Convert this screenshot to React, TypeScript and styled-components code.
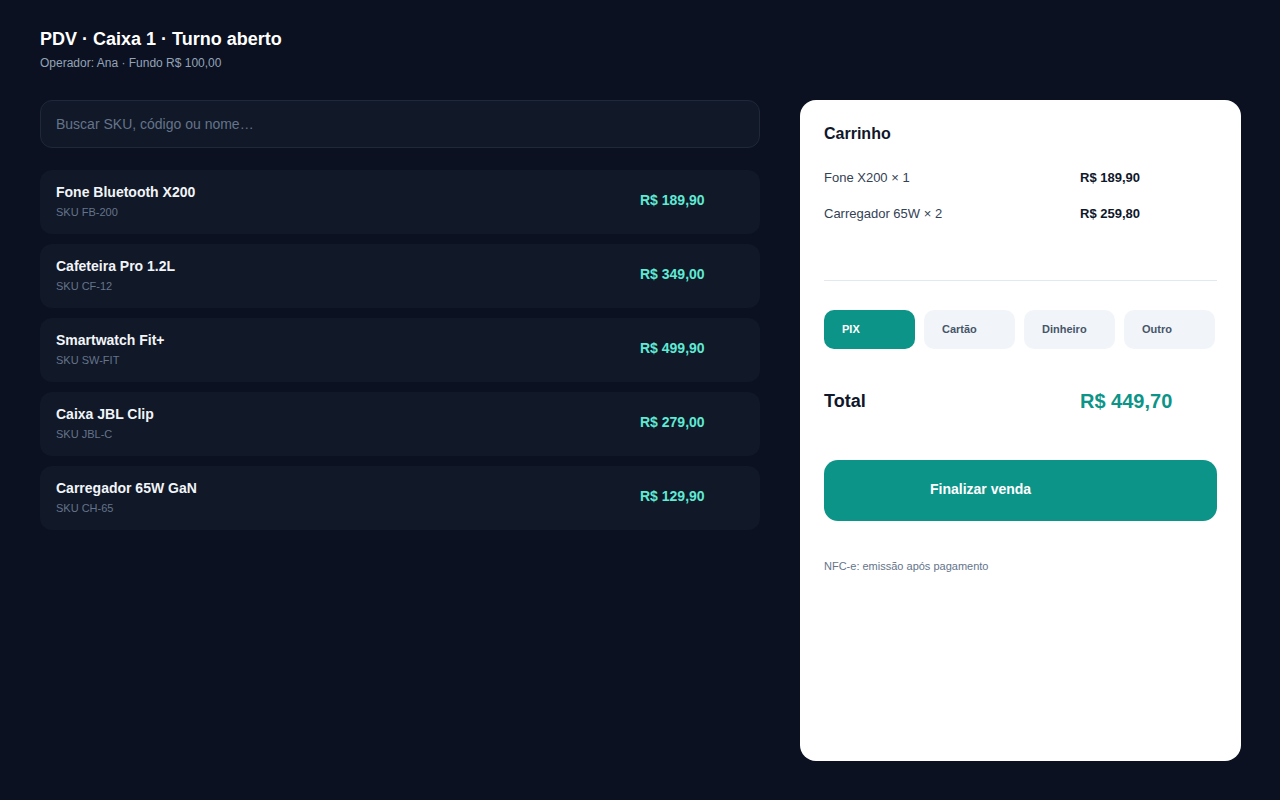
import React from 'react';
import styled, { createGlobalStyle } from 'styled-components';

const GlobalStyle = createGlobalStyle`
  html, body {
    margin: 0;
    padding: 0;
    background: #0b1120;
    font-family: "Liberation Sans", Arial, sans-serif;
  }
  * { box-sizing: border-box; }
`;

const Page = styled.div`
  width: 1280px;
  height: 800px;
  padding: 28px 39px 39px 40px;
  background: #0b1120;
  display: flex;
  flex-direction: column;
`;

const Header = styled.header`
  display: flex;
  flex-direction: column;
  gap: 5px;
  margin-bottom: 29px;
`;

const Title = styled.h1`
  margin: 0;
  font-size: 18px;
  line-height: 22px;
  font-weight: 700;
  color: #ffffff;
`;

const Subtitle = styled.div`
  font-size: 12px;
  line-height: 16px;
  color: #94a3b8;
`;

const Main = styled.main`
  flex: 1;
  display: grid;
  grid-template-columns: 720px 441px;
  gap: 40px;
  min-height: 0;
`;

const Catalog = styled.section`
  display: flex;
  flex-direction: column;
`;

const Search = styled.input`
  height: 48px;
  width: 100%;
  padding: 0 15px;
  margin-bottom: 22px;
  border-radius: 12px;
  border: 1px solid #1e293b;
  background: #111827;
  color: #e2e8f0;
  font-family: inherit;
  font-size: 14px;
  outline: none;
  &::placeholder { color: #64748b; }
`;

const ProductList = styled.div`
  display: flex;
  flex-direction: column;
  gap: 10px;
`;

const ProductRow = styled.div`
  height: 64px;
  padding: 0 16px;
  border-radius: 12px;
  background: #111827;
  display: grid;
  grid-template-columns: 1fr 104px;
  align-items: center;
`;

const ProductInfo = styled.div`
  display: flex;
  flex-direction: column;
  gap: 4px;
  margin-bottom: 2px;
`;

const ProductName = styled.div`
  font-size: 14px;
  line-height: 18px;
  font-weight: 700;
  color: #f1f5f9;
`;

const ProductSku = styled.div`
  font-size: 11px;
  line-height: 14px;
  color: #64748b;
`;

const ProductPrice = styled.div`
  font-size: 14px;
  font-weight: 700;
  color: #5eead4;
  margin-bottom: 4px;
`;

const Cart = styled.aside`
  background: #ffffff;
  border-radius: 16px;
  padding: 24px;
  display: flex;
  flex-direction: column;
`;

const CartTitle = styled.h2`
  margin: 0 0 15px;
  font-size: 16px;
  line-height: 20px;
  font-weight: 700;
  color: #0f172a;
`;

const CartItems = styled.div`
  display: flex;
  flex-direction: column;
  min-height: 121px;
`;

const LineRow = styled.div`
  height: 36px;
  display: grid;
  grid-template-columns: 1fr 137px;
  align-items: center;
`;

const ItemLabel = styled.span`
  font-size: 13px;
  color: #334155;
`;

const ItemPrice = styled.span`
  font-size: 13px;
  font-weight: 700;
  color: #0f172a;
`;

const Divider = styled.hr`
  margin: 0 0 29px;
  border: 0;
  border-top: 1px solid #e2e8f0;
`;

const Methods = styled.div`
  display: grid;
  grid-template-columns: repeat(4, 91px);
  gap: 9px;
  margin-bottom: 32px;
`;

const Method = styled.button<{ $active?: boolean }>`
  height: 39px;
  border: 0;
  border-radius: 10px;
  padding: 0 18px 2px;
  text-align: left;
  font-family: inherit;
  font-size: 11px;
  font-weight: 700;
  cursor: pointer;
  background: ${(p) => (p.$active ? '#0d9488' : '#f1f5f9')};
  color: ${(p) => (p.$active ? '#ffffff' : '#475569')};
`;

const TotalRow = styled.div`
  display: grid;
  grid-template-columns: 1fr 137px;
  align-items: center;
  height: 40px;
  margin-bottom: 39px;
`;

const TotalLabel = styled.span`
  font-size: 18px;
  font-weight: 700;
  color: #0f172a;
`;

const TotalValue = styled.span`
  font-size: 20px;
  font-weight: 700;
  color: #0d9488;
`;

const Checkout = styled.button`
  height: 61px;
  width: 100%;
  border: 0;
  border-radius: 14px;
  background: #0d9488;
  color: #ffffff;
  font-family: inherit;
  font-size: 14px;
  font-weight: 700;
  text-align: left;
  padding: 0 0 4px 106px;
  cursor: pointer;
  margin-bottom: 39px;
`;

const Note = styled.div`
  font-size: 11px;
  color: #64748b;
`;

const products = [
  { name: 'Fone Bluetooth X200', sku: 'FB-200', price: 'R$ 189,90' },
  { name: 'Cafeteira Pro 1.2L', sku: 'CF-12', price: 'R$ 349,00' },
  { name: 'Smartwatch Fit+', sku: 'SW-FIT', price: 'R$ 499,90' },
  { name: 'Caixa JBL Clip', sku: 'JBL-C', price: 'R$ 279,00' },
  { name: 'Carregador 65W GaN', sku: 'CH-65', price: 'R$ 129,90' },
];

const cartItems = [
  { label: 'Fone X200 × 1', total: 'R$ 189,90' },
  { label: 'Carregador 65W × 2', total: 'R$ 259,80' },
];

const methods = ['PIX', 'Cartão', 'Dinheiro', 'Outro'];

const App = () => (
  <>
    <GlobalStyle />
    <Page>
      <Header>
        <Title>PDV · Caixa 1 · Turno aberto</Title>
        <Subtitle>Operador: Ana · Fundo R$ 100,00</Subtitle>
      </Header>
      <Main>
        <Catalog>
          <Search placeholder="Buscar SKU, código ou nome…" />
          <ProductList>
            {products.map((p) => (
              <ProductRow key={p.sku}>
                <ProductInfo>
                  <ProductName>{p.name}</ProductName>
                  <ProductSku>{`SKU ${p.sku}`}</ProductSku>
                </ProductInfo>
                <ProductPrice>{p.price}</ProductPrice>
              </ProductRow>
            ))}
          </ProductList>
        </Catalog>
        <Cart>
          <CartTitle>Carrinho</CartTitle>
          <CartItems>
            {cartItems.map((item) => (
              <LineRow key={item.label}>
                <ItemLabel>{item.label}</ItemLabel>
                <ItemPrice>{item.total}</ItemPrice>
              </LineRow>
            ))}
          </CartItems>
          <Divider />
          <Methods>
            {methods.map((m) => (
              <Method key={m} $active={m === 'PIX'}>
                {m}
              </Method>
            ))}
          </Methods>
          <TotalRow>
            <TotalLabel>Total</TotalLabel>
            <TotalValue>R$ 449,70</TotalValue>
          </TotalRow>
          <Checkout>Finalizar venda</Checkout>
          <Note>NFC-e: emissão após pagamento</Note>
        </Cart>
      </Main>
    </Page>
  </>
);

export default App;
